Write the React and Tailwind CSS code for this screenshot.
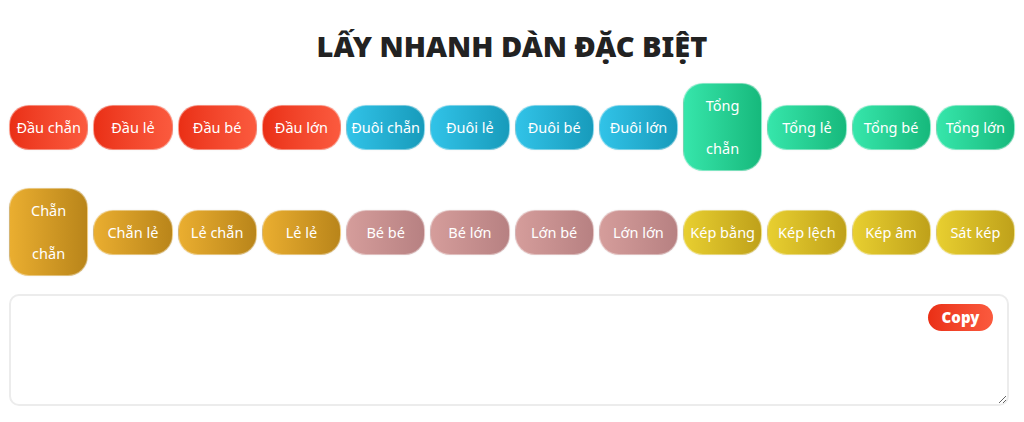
import React from 'react';

const groups = {
    red: 'bg-gradient-to-r from-[#ea2f15] to-[#fb5a3e]',
    blue: 'bg-gradient-to-r from-[#31c3e8] to-[#179bbb]',
    green: 'bg-gradient-to-r from-[#36e6ab] to-[#16b97c]',
    gold: 'bg-gradient-to-r from-[#eaae30] to-[#b9851a]',
    pink: 'bg-gradient-to-r from-[#d59d9b] to-[#b78182]',
    yellow: 'bg-gradient-to-r from-[#e8cf30] to-[#bfa11a]',
};

const buttons = [
    ['Đầu chẵn', 'red'], ['Đầu lẻ', 'red'], ['Đầu bé', 'red'], ['Đầu lớn', 'red'],
    ['Đuôi chẵn', 'blue'], ['Đuôi lẻ', 'blue'], ['Đuôi bé', 'blue'], ['Đuôi lớn', 'blue'],
    ['Tổng chẵn', 'green'], ['Tổng lẻ', 'green'], ['Tổng bé', 'green'], ['Tổng lớn', 'green'],
    ['Chẵn chẵn', 'gold'], ['Chẵn lẻ', 'gold'], ['Lẻ chẵn', 'gold'], ['Lẻ lẻ', 'gold'],
    ['Bé bé', 'pink'], ['Bé lớn', 'pink'], ['Lớn bé', 'pink'], ['Lớn lớn', 'pink'],
    ['Kép bằng', 'yellow'], ['Kép lệch', 'yellow'], ['Kép âm', 'yellow'], ['Sát kép', 'yellow'],
];

export default function App() {
    return (
        <div className="bg-white min-h-screen px-[9px] pt-[28px] font-['Noto_Sans',sans-serif]">
            <h1 className="text-center text-[29px] font-black text-[#222] leading-[36px] mb-[19px]">
                LẤY NHANH DÀN ĐẶC BIỆT
            </h1>

            <div className="grid grid-cols-12 gap-x-[5px] gap-y-[17px] items-center">
                {buttons.map(([label, color]) => (
                    <button
                        key={label}
                        className={`${groups[color]} text-white text-[14.5px] leading-[43px] px-[4px] rounded-[20px] border border-white/40 shadow-[0_0_2px_rgba(0,0,0,0.08)]`}
                    >
                        {label}
                    </button>
                ))}
            </div>

            <div className="relative mt-[18px] mr-[6px]">
                <textarea
                    className="block w-full h-[112px] rounded-[10px] border-2 border-[#ececec] bg-white outline-none p-2"
                />
                <button className="absolute top-[10px] right-[16px] w-[65px] h-[27px] rounded-full bg-gradient-to-r from-[#ea2f15] to-[#fb5a3e] text-white font-black text-[15px] leading-[27px]">
                    Copy
                </button>
            </div>
        </div>
    );
}
